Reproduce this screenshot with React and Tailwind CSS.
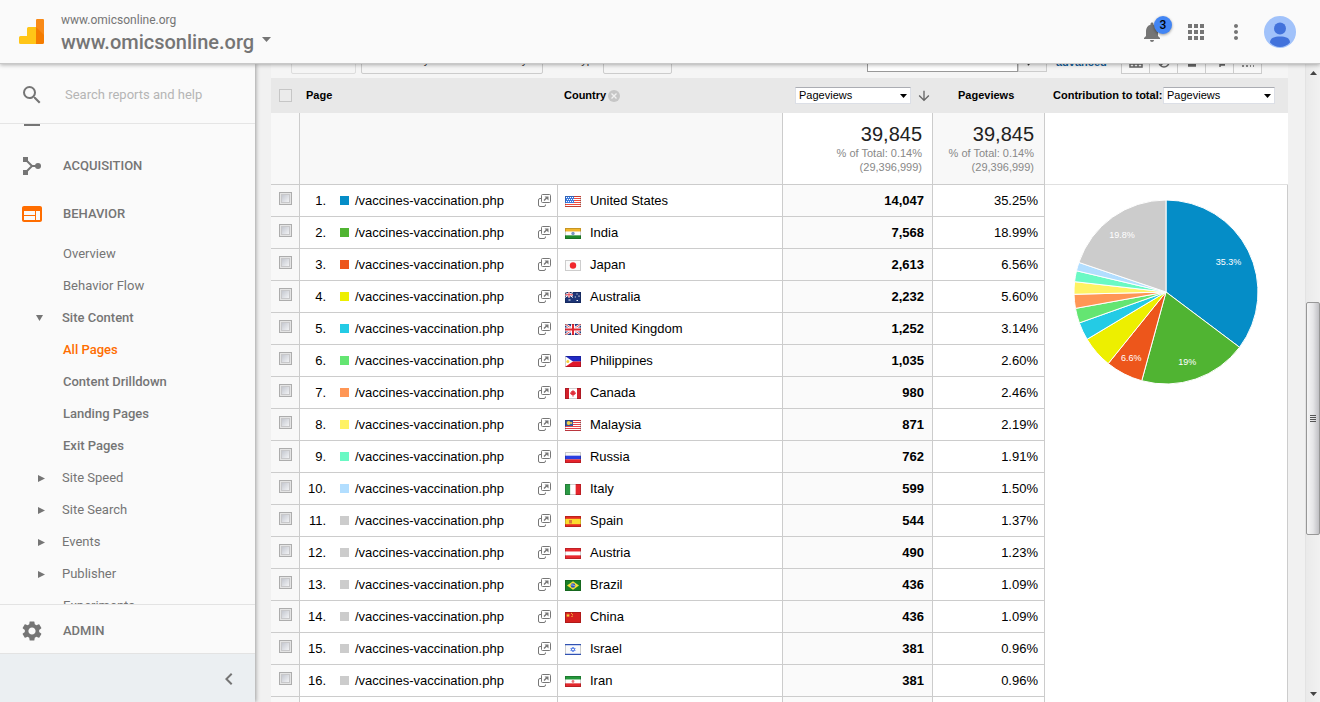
import { useState } from 'react';
import {
  MdApps,
  MdArrowDownward,
  MdChevronLeft,
  MdMoreVert,
  MdNotifications,
  MdSearch,
  MdSettings,
  MdWeb,
} from 'react-icons/md';

const TOTAL = 39845;
const PAGE_PATH = '/vaccines-vaccination.php';
const OTHER_COLOR = '#cccccc';

const ROWS = [
  { country: 'United States', flag: 'us', views: 14047, share: '35.25%', color: '#058dc7' },
  { country: 'India', flag: 'in', views: 7568, share: '18.99%', color: '#50b432' },
  { country: 'Japan', flag: 'jp', views: 2613, share: '6.56%', color: '#ed561b' },
  { country: 'Australia', flag: 'au', views: 2232, share: '5.60%', color: '#edef00' },
  { country: 'United Kingdom', flag: 'gb', views: 1252, share: '3.14%', color: '#24cbe5' },
  { country: 'Philippines', flag: 'ph', views: 1035, share: '2.60%', color: '#64e572' },
  { country: 'Canada', flag: 'ca', views: 980, share: '2.46%', color: '#ff9655' },
  { country: 'Malaysia', flag: 'my', views: 871, share: '2.19%', color: '#fff263' },
  { country: 'Russia', flag: 'ru', views: 762, share: '1.91%', color: '#6af9c4' },
  { country: 'Italy', flag: 'it', views: 599, share: '1.50%', color: '#b2deff' },
  { country: 'Spain', flag: 'es', views: 544, share: '1.37%', color: OTHER_COLOR },
  { country: 'Austria', flag: 'at', views: 490, share: '1.23%', color: OTHER_COLOR },
  { country: 'Brazil', flag: 'br', views: 436, share: '1.09%', color: OTHER_COLOR },
  { country: 'China', flag: 'cn', views: 436, share: '1.09%', color: OTHER_COLOR },
  { country: 'Israel', flag: 'il', views: 381, share: '0.96%', color: OTHER_COLOR },
  { country: 'Iran', flag: 'ir', views: 381, share: '0.96%', color: OTHER_COLOR },
];

const NAV_ITEMS = [
  { label: 'Overview' },
  { label: 'Behavior Flow' },
  { label: 'Site Content', marker: 'open' },
  { label: 'All Pages', active: true, bold: true },
  { label: 'Content Drilldown', bold: true },
  { label: 'Landing Pages', bold: true },
  { label: 'Exit Pages', bold: true },
  { label: 'Site Speed', marker: 'closed' },
  { label: 'Site Search', marker: 'closed' },
  { label: 'Events', marker: 'closed' },
  { label: 'Publisher', marker: 'closed' },
  { label: 'Experiments' },
];

// Horizontal or vertical three band flags
const Bands = ({ colors, vertical }) =>
  colors.map((color, i) =>
    vertical ? (
      <rect key={i} x={i * 5.33} width="5.4" height="11" fill={color} />
    ) : (
      <rect key={i} y={i * 3.67} width="16" height="3.7" fill={color} />
    )
  );

const UnionJack = () => (
  <>
    <rect width="16" height="11" fill="#2b4a9b" />
    <path d="M0 0l16 11M16 0L0 11" stroke="#fff" strokeWidth="2.4" />
    <path d="M0 0l16 11M16 0L0 11" stroke="#e0404a" strokeWidth="0.9" />
    <path d="M8 0v11M0 5.5h16" stroke="#fff" strokeWidth="4" />
    <path d="M8 0v11M0 5.5h16" stroke="#e02a35" strokeWidth="2" />
  </>
);

const FLAGS = {
  us: (
    <>
      <rect width="16" height="11" fill="#fff" />
      <path d="M0 .5h16M0 2.5h16M0 4.5h16M0 6.5h16M0 8.5h16M0 10.5h16" stroke="#ee4b3c" />
      <rect width="9" height="7" fill="#3d7be0" />
      <path d="M1 1.5h7M2 3.5h7M1 5.5h7" stroke="#fff" strokeDasharray="1 1" />
    </>
  ),
  in: (
    <>
      <Bands colors={['#f2b62c', '#ffffff', '#1f8a2b']} />
      <circle cx="8" cy="5.5" r="1.7" fill="#7d97c4" />
    </>
  ),
  jp: (
    <>
      <rect width="16" height="11" fill="#fafafa" />
      <circle cx="8" cy="5.5" r="3.2" fill="#f0262d" />
    </>
  ),
  au: (
    <>
      <rect width="16" height="11" fill="#1c3476" />
      <path d="M0 0l8 5.5M8 0L0 5.5" stroke="#fff" />
      <path d="M4 0v5.5M0 2.75h8" stroke="#fff" strokeWidth="2" />
      <path d="M4 0v5.5M0 2.75h8" stroke="#e8454f" />
      <path d="M3.5 8h2M11.5 2h1M9.8 5h1M13.5 4.2h1M11.5 8.5h1.5" stroke="#fff" strokeWidth="1.2" />
    </>
  ),
  gb: <UnionJack />,
  ph: (
    <>
      <rect width="16" height="5.5" fill="#2029c4" />
      <rect y="5.5" width="16" height="5.5" fill="#e0182a" />
      <path d="M0 0l8 5.5L0 11z" fill="#fff" />
      <circle cx="2.8" cy="5.5" r="1.5" fill="#f3cf3b" />
    </>
  ),
  ca: (
    <>
      <rect width="16" height="11" fill="#fff" />
      <rect width="4" height="11" fill="#d3202c" />
      <rect x="12" width="4" height="11" fill="#d3202c" />
      <path d="M8 1.8l.9 1.5 1-.2-.2 1.5 1.4-.2-.4 1.4-1.7 1.4h-.6v1.600h-.8V7.200H7L5.300 5.800l-.4-1.400 1.400.2-.2-1.500 1 .2z" fill="#e0303c" />
    </>
  ),
  my: (
    <>
      <rect width="16" height="11" fill="#fff" />
      <path d="M0 .5h16M0 2.5h16M0 4.5h16M0 6.5h16M0 8.5h16M0 10.5h16" stroke="#e3434c" />
      <rect width="8" height="6" fill="#35529c" />
      <circle cx="3.6" cy="3" r="1.9" fill="#f0d24a" />
      <circle cx="6.2" cy="3" r="1.1" fill="#f0d24a" />
    </>
  ),
  ru: <Bands colors={['#f7f7f7', '#2a3fe0', '#e5232b']} />,
  it: <Bands vertical colors={['#2c9a45', '#ffffff', '#e5252c']} />,
  es: (
    <>
      <rect width="16" height="11" fill="#e62a22" />
      <rect y="2.8" width="16" height="5.4" fill="#fbdc2e" />
      <rect x="4" y="4" width="3" height="3.5" fill="#dc7a3a" />
    </>
  ),
  at: <Bands colors={['#e8292f', '#ffffff', '#e8292f']} />,
  br: (
    <>
      <rect width="16" height="11" fill="#1b7f27" />
      <path d="M8 1.2l6 4.3-6 4.3-6-4.3z" fill="#f7e23a" />
      <circle cx="8" cy="5.5" r="2.3" fill="#2a52ba" />
      <path d="M6 5q2-.6 4 1" stroke="#fff" strokeWidth="0.6" fill="none" />
    </>
  ),
  cn: (
    <>
      <rect width="16" height="11" fill="#d6201f" />
      <path d="M3 1.2l.6 1.5h1.500L4 3.700l.4 1.500L3 4.300l-1.400.9L2 3.700.9 2.700h1.500z" fill="#f8d13c" />
      <path d="M6 1.3h1M7 2.8h1M6.5 4.5h1" stroke="#f8d13c" />
    </>
  ),
  il: (
    <>
      <rect width="16" height="11" fill="#fafafa" />
      <path d="M0 .7h16M0 10.3h16" stroke="#3b63d8" strokeWidth="1.3" />
      <path d="M8 3l2.200 3.600H5.800zM8 8L5.800 4.400h4.400z" stroke="#4f78e6" strokeWidth="0.8" fill="none" />
    </>
  ),
  ir: (
    <>
      <Bands colors={['#23973a', '#ffffff', '#e2282d']} />
      <circle cx="8" cy="5.5" r="1.4" fill="#ec7a7d" />
    </>
  ),
};

const Flag = ({ code }) => (
  <svg className="mt-0.5 h-[11px] w-4 shrink-0" viewBox="0 0 16 11" aria-hidden="true">
    {FLAGS[code]}
    <rect x="0.5" y="0.5" width="15" height="10" fill="none" stroke="#000" strokeOpacity="0.18" />
  </svg>
);

const AnalyticsLogo = () => (
  <svg className="ml-px h-[25px] w-[26px] shrink-0" viewBox="0 0 26 25" aria-hidden="true">
    <path d="M17 8H9.5A1.5 1.5 0 008 9.5V17H1.5A1.5 1.5 0 000 18.5v5A1.5 1.5 0 001.5 25H17z" fill="#ffc517" />
    <path d="M17 1.5A1.5 1.5 0 0118.5 0h5A1.5 1.5 0 0125 1.5v22a1.5 1.5 0 01-1.5 1.5H17z" fill="#f57c00" />
    <path d="M17 1.5A1.5 1.5 0 0118.5 0h5A1.5 1.5 0 0125 1.5V16l-8-8z" fill="#f98a17" />
  </svg>
);

const AcquisitionIcon = () => (
  <svg className="size-6 shrink-0" viewBox="0 0 24 24" fill="currentColor" aria-hidden="true">
    <path d="M3 3h5v5H3zM3 16h5v5H3z" />
    <path d="M5.5 5.5L12 12l-6.5 6.5M12 12h6" fill="none" stroke="currentColor" strokeWidth="2" />
    <circle cx="18" cy="12" r="3" />
  </svg>
);

const PopoutIcon = () => (
  <svg className="size-[13px]" viewBox="0 0 13 13" fill="none" stroke="#777" aria-hidden="true">
    <path d="M3.5 4.5H2A1.5 1.5 0 00.5 6v5A1.5 1.5 0 002 12.5h4A1.5 1.5 0 007.5 11v-.5" />
    <path d="M4.500.5h7a1 1 0 011 1v6a1 1 0 01-1 1h-7a1 1 0 01-1-1v-6a1 1 0 011-1z" />
    <path d="M6 6.500l3-3" strokeWidth="1.5" />
    <path d="M6.500 2.500h4v4z" fill="#777" stroke="none" />
  </svg>
);

const Triangle = ({ open }) => (
  <svg className={open ? 'h-[6px] w-[7px]' : 'ml-0.5 h-[7px] w-[7px]'} viewBox="0 0 7 7" preserveAspectRatio="none" fill="#757575" aria-hidden="true">
    <path d={open ? 'M0 0h7L3.5 7z' : 'M0 0l7 3.5L0 7z'} />
  </svg>
);

const MetricSelect = ({ id, className }) => (
  <span className={`relative inline-block h-[17px] ${className}`}>
    <select
      id={id}
      aria-label={id === 'metric' ? 'Metric' : undefined}
      className="block h-full w-full appearance-none border border-[#dcdfe6] border-t-[#abadb3] bg-white pl-[3px] text-[11px] leading-[15px] font-normal text-black"
    >
      <option>Pageviews</option>
    </select>
    <svg className="pointer-events-none absolute top-[7px] right-1 h-1 w-[7px]" viewBox="0 0 7 4" aria-hidden="true">
      <path d="M0 0h7L3.5 4z" />
    </svg>
  </span>
);

const TopBar = () => (
  <header className="relative z-20 flex h-16 shrink-0 items-center border-b border-[#c8c8c8] bg-[#fafafa] pr-6 pl-[18px] text-[#757575] shadow-[0_1px_4px_rgba(0,0,0,0.3)]">
    <AnalyticsLogo />
    <div className="ml-4 pt-1">
      <div className="text-[12px] leading-4">www.omicsonline.org</div>
      <button type="button" className="flex items-center gap-2 text-[20px] leading-7 font-medium">
        www.omicsonline.org
        <svg className="-mt-1 h-[5px] w-[9px]" viewBox="0 0 9 5" fill="currentColor" aria-hidden="true">
          <path d="M0 0h9L4.5 5z" />
        </svg>
      </button>
    </div>
    <div className="ml-auto flex items-center gap-4">
      <button type="button" aria-label="Notifications" className="relative mr-1">
        <MdNotifications className="size-6" />
        <span className="absolute -top-1 -right-2 flex size-[18px] items-center justify-center rounded-full bg-[#4285f4] text-[12px] font-medium text-black shadow-[0_1px_3px_rgba(0,0,0,0.4)]">
          3
        </span>
      </button>
      <button type="button" aria-label="Apps">
        <MdApps className="size-6" />
      </button>
      <button type="button" aria-label="More">
        <MdMoreVert className="size-6" />
      </button>
      <button type="button" aria-label="Account">
        <svg className="size-8" viewBox="0 0 32 32" aria-hidden="true">
          <circle cx="16" cy="16" r="16" fill="#a1c2fa" />
          <circle cx="16" cy="12.5" r="6" fill="#4272db" />
          <path d="M6 26.5C6 22 10.5 20.5 16 20.5S26 22 26 26.500A14.500 14.500 0 0116 31 14.500 14.500 0 016 26.500z" fill="#4272db" />
        </svg>
      </button>
    </div>
  </header>
);

const Sidebar = () => (
  <aside className="z-10 flex w-[255px] shrink-0 flex-col bg-[#fafafa] text-[13px] text-[#757575] shadow-[1px_0_4px_rgba(0,0,0,0.35)]">
    <label className="flex h-[60px] shrink-0 items-center gap-[21px] border-b border-[#e5e5e5] pt-0.5 pl-5">
      <MdSearch className="size-6 shrink-0" />
      <input
        type="text"
        aria-label="Search reports and help"
        placeholder="Search reports and help"
        className="w-full min-w-0 bg-transparent outline-none placeholder:text-[#b5b5b5]"
      />
    </label>

    <nav className="min-h-0 flex-1 overflow-hidden">
      {/* tail of the section scrolled out above */}
      <div className="h-[18px] pl-6">
        <div className="h-0.5 w-4 bg-[#757575]" />
      </div>
      <a href="#acquisition" className="flex h-12 items-center gap-[19px] pl-5 font-medium">
        <AcquisitionIcon />
        ACQUISITION
      </a>
      <a href="#behavior" className="flex h-12 items-center gap-[19px] pl-5 font-medium">
        <MdWeb className="size-6 text-[#ff6d00]" />
        BEHAVIOR
      </a>
      <ul>
        {NAV_ITEMS.map(({ label, marker, active, bold }) => (
          <li key={label}>
            <a
              href="#report"
              className={`flex h-8 items-center pl-9 ${active ? 'text-[#ff6d00]' : ''} ${bold || marker === 'open' ? 'font-medium' : ''}`}
            >
              <span className={marker ? 'w-[26px] shrink-0' : 'w-[27px] shrink-0'}>
                {marker && <Triangle open={marker === 'open'} />}
              </span>
              {label}
            </a>
          </li>
        ))}
      </ul>
    </nav>

    <a href="#admin" className="flex h-[50px] shrink-0 items-center gap-[19px] border-y border-[#e3e3e3] pt-1 pl-5 font-medium">
      <MdSettings className="size-6" />
      ADMIN
    </a>
    <div className="flex h-12 shrink-0 items-center justify-end bg-[#ebeff2] pt-0.5 pr-[14px]">
      <button type="button" aria-label="Collapse menu">
        <MdChevronLeft className="size-6" />
      </button>
    </div>
  </aside>
);

const VIEW_ICONS = [
  { name: 'Table', path: 'M1 1h12v10H1zM1 4.5h12M1 8h12M5 1v10M9 1v10' },
  { name: 'Percentage', path: 'M7 1a5 5 0 100 10A5 5 0 007 1zM7 1v5h5M4 9l3-3' },
  { name: 'Performance', path: 'M3 2h4M3 4h6M3 6h6M3 8h8M3 9h8M3 10h8' },
  { name: 'Comparison', path: 'M7 1v10M7 3h4M7 8h5M7 9h5M3 6h4' },
  { name: 'Pivot', path: 'M1 10h2M5 10h2M9 10h1M12 10h1M1 7h3' },
];

// Only the lower edge of the toolbar shows under the top bar
const Toolbar = () => (
  <div className="flex h-[14px] items-end overflow-hidden bg-[#f5f5f5] pr-[26px] pb-1 pl-5 text-[11px] text-[#333]">
    <button type="button" className="h-7 w-[65px] shrink-0 rounded-xs border border-[#ddd] text-[#aaa]">Plot Rows</button>
    <button type="button" className="ml-[5px] h-7 w-[182px] shrink-0 rounded-xs border border-[#ccc]">
      Secondary dimension: Country
    </button>
    <span className="ml-[9px] h-7 w-[51px] shrink-0 leading-7">Sort Type:</span>
    <button type="button" className="h-7 w-[69px] shrink-0 rounded-xs border border-[#ccc]">Default</button>
    <div className="mb-0.5 ml-auto flex h-6">
      <input type="text" aria-label="Filter rows" className="w-[151px] border border-[#999] bg-white" />
      <button type="button" aria-label="Filter" className="flex w-[29px] items-center justify-center border border-[#ccc] bg-[#f1f1f1]">
        <MdSearch className="size-4 -scale-x-100" />
      </button>
    </div>
    <a href="#advanced" className="ml-[9px] h-6 w-[65px] leading-6 font-bold text-[#15609c]">advanced</a>
    <div className="flex h-6">
      {VIEW_ICONS.map(({ name, path }) => (
        <button
          key={name}
          type="button"
          aria-label={name}
          className="-ml-px flex w-[29px] items-center justify-center border border-[#ccc] bg-[#f8f8f8] first:ml-0"
        >
          <svg className="h-3 w-[14px]" viewBox="0 0 14 12" fill="none" stroke="#666" strokeWidth="1.5" aria-hidden="true">
            <path d={path} />
          </svg>
        </button>
      ))}
    </div>
  </div>
);

const Summary = ({ className }) => (
  <td className={`border-r border-b border-[#ccc] pt-[9px] pr-[10px] text-right align-top ${className}`}>
    <div className="text-[20px] leading-6 text-[#222]">{TOTAL.toLocaleString('en-US')}</div>
    <div className="text-[11px] leading-[14px] whitespace-nowrap text-[#888]">
      % of Total: 0.14%
      <br />
      (29,396,999)
    </div>
  </td>
);

const ReportTable = () => {
  const [selected, setSelected] = useState([]);

  const toggleRow = (index) => {
    setSelected(selected.includes(index) ? selected.filter((i) => i !== index) : [...selected, index]);
  };

  return (
    <table className="min-w-0 flex-1 table-fixed border-separate border-spacing-0 bg-white text-[13px] text-black">
      <colgroup>
        <col className="w-[29px]" />
        <col className="w-1/3" />
        <col />
        <col className="w-[150px]" />
        <col className="w-[112px]" />
      </colgroup>
      <thead className="bg-[#e8e8e8] text-left text-[11px]">
        <tr className="h-[35px]">
          <th className="pl-2">
            <input type="checkbox" aria-label="Select all" className="block size-[13px] appearance-none border border-[#c6c6c6] bg-[#ebebeb]" />
          </th>
          <th className="pl-[6px]">Page</th>
          <th className="pl-[6px]">
            <span className="flex items-center gap-0.5">
              Country
              <button type="button" aria-label="Remove dimension">
                <svg className="block size-3" viewBox="0 0 12 12" aria-hidden="true">
                  <circle cx="6" cy="6" r="6" fill="#c6c6c6" />
                  <path d="M3.5 3.5l5 5M8.5 3.5l-5 5" stroke="#f1f1f1" strokeWidth="1.3" />
                </svg>
              </button>
            </span>
          </th>
          <th className="pl-3">
            <span className="flex items-center gap-[5px]">
              <MetricSelect id="metric" className="w-[116px]" />
              <MdArrowDownward className="size-4 stroke-[#666] text-[#666]" />
            </span>
          </th>
          <th className="pl-[25px]">Pageviews</th>
        </tr>
      </thead>
      <tbody>
        <tr className="h-[72px]">
          <td className="border-r border-b border-[#ccc] bg-[#f8f8f8]" />
          <td colSpan={2} className="border-r border-b border-[#ccc] bg-[#f8f8f8]" />
          <Summary className="bg-white" />
          <Summary className="bg-[#f8f8f8]" />
        </tr>
        {ROWS.map((row, index) => (
          <tr key={row.country} className="h-8">
            <td className="border-r border-b border-[#ccc] bg-[#f8f8f8] pt-[7px] pl-2 align-top">
              <input
                type="checkbox"
                aria-label={`Select ${row.country}`}
                checked={selected.includes(index)}
                onChange={() => toggleRow(index)}
                className="block size-[13px] appearance-none border border-[#adadad] bg-linear-to-br from-[#b8bcc6] to-white shadow-[inset_0_0_0_1px_#e4e4e4,inset_0_0_0_2px_#c8c8ca] checked:from-[#666] checked:to-[#888]"
              />
            </td>
            <td className="border-r border-b border-[#ccc]">
              <div className="flex items-center pr-[6px]">
                <span className="w-[26px] shrink-0 text-right">{index + 1}.</span>
                <span className="mr-[6px] ml-[14px] size-[9px] shrink-0" style={{ backgroundColor: row.color }} />
                <a href="#page">{PAGE_PATH}</a>
                <button type="button" aria-label="Open page" className="ml-auto">
                  <PopoutIcon />
                </button>
              </div>
            </td>
            <td className="border-r border-b border-[#ccc]">
              <a href="#country" className="flex items-center gap-[9px] pl-[7px]">
                <Flag code={row.flag} />
                {row.country}
              </a>
            </td>
            <td className="border-r border-b border-[#ccc] bg-[#fafafa] pr-2 text-right font-bold">{row.views.toLocaleString('en-US')}</td>
            <td className="border-r border-b border-[#ccc] pr-[6px] text-right">{row.share}</td>
          </tr>
        ))}
        <tr className="h-8">
          <td className="border-r border-[#ccc] bg-[#f8f8f8]" />
          <td className="border-r border-[#ccc]" />
          <td className="border-r border-[#ccc]" />
          <td className="border-r border-[#ccc] bg-[#fafafa]" />
          <td className="border-r border-[#ccc]" />
        </tr>
      </tbody>
    </table>
  );
};

const PieChart = () => {
  const center = 93;
  const radius = 92;
  const top = ROWS.slice(0, 10);
  const rest = TOTAL - top.reduce((sum, row) => sum + row.views, 0);
  const point = (fraction, r) => {
    const angle = fraction * 2 * Math.PI;
    return [center + r * Math.sin(angle), center - r * Math.cos(angle)];
  };

  let start = 0;
  const slices = [...top, { views: rest, color: OTHER_COLOR }].map(({ views, color }) => {
    const size = views / TOTAL;
    const slice = { color, size, from: point(start, radius), to: point(start + size, radius), label: point(start + size / 2, 72) };
    start += size;
    return slice;
  });

  return (
    <svg className="mx-auto size-[186px]" viewBox="0 0 186 186" role="img" aria-label="Contribution to total pageviews">
      {slices.map(({ color, from, to }, i) => (
        <path key={i} d={`M${center} ${center}L${from}A${radius} ${radius} 0 0 1 ${to}z`} fill={color} stroke="#fff" />
      ))}
      {slices
        .filter(({ size }) => size > 0.06)
        .map(({ size, label }, i) => (
          <text key={i} x={label[0] - 2} y={label[1] + 5} textAnchor="middle" fill="#fff" fontSize="9">
            {`${Number((size * 100).toFixed(1))}%`}
          </text>
        ))}
    </svg>
  );
};

const ChartPanel = () => (
  <section className="flex w-[243px] shrink-0 flex-col bg-white text-black">
    <div className="flex h-[35px] items-center justify-between bg-[#e8e8e8] pr-[13px] pl-2 text-[11px] font-bold">
      <label htmlFor="contribution" className="whitespace-nowrap">Contribution to total:</label>
      <MetricSelect id="contribution" className="w-28" />
    </div>
    <div className="h-[72px] border-b border-[#e0e0e0]" />
    <div className="flex-1 border-r border-[#ccc] pt-[14px]">
      <PieChart />
    </div>
  </section>
);

const Scrollbar = () => (
  <div className="flex w-[15px] shrink-0 flex-col border-l border-[#e3e3e3] bg-linear-to-r from-[#eaeaea] to-[#f1f1f1]" aria-hidden="true">
    <div className="flex h-[17px] items-center justify-center">
      <svg className="h-1 w-[7px]" viewBox="0 0 7 4" fill="#444"><path d="M0 4h7L3.5 0z" /></svg>
    </div>
    <div className="grow-[222] basis-0" />
    <div className="flex grow-[231] basis-0 flex-col items-center justify-center gap-px rounded-xs border border-[#979797] bg-linear-to-r from-[#f5f5f5] via-[#e6e6e8] to-[#c0c0c4]">
      <div className="h-px w-[6px] bg-[#555]" />
      <div className="h-px w-[6px] bg-[#555]" />
      <div className="h-px w-[6px] bg-[#555]" />
      <div className="h-px w-[6px] bg-[#555]" />
    </div>
    <div className="grow-[151] basis-0" />
    <div className="flex h-[17px] items-center justify-center">
      <svg className="h-1 w-[7px]" viewBox="0 0 7 4" fill="#444"><path d="M0 0h7L3.5 4z" /></svg>
    </div>
  </div>
);

const App = () => (
  <div className="flex h-screen flex-col overflow-hidden bg-[#f1f1f1] font-['Roboto',sans-serif]">
    <TopBar />
    <div className="flex min-h-0 flex-1">
      <Sidebar />
      <main className="min-w-0 flex-1 overflow-hidden pr-[17px] pl-4 font-['Liberation_Sans',Arial,sans-serif]">
        <Toolbar />
        <div className="flex items-stretch">
          <ReportTable />
          <ChartPanel />
        </div>
      </main>
      <Scrollbar />
    </div>
  </div>
);

export default App;
